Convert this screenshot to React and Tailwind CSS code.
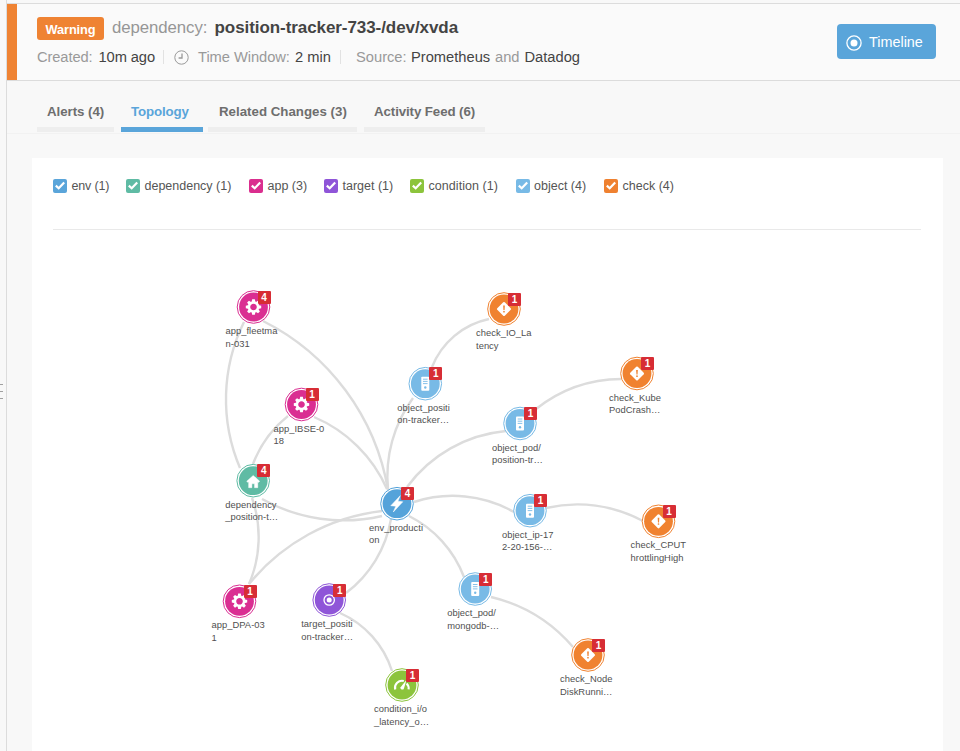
import React from "react";

const LEGEND = [
  { label: "env (1)", box: "bg-[#5aa5da]", width: "w-[73px]", tracking: "tracking-[-0.15px]" },
  { label: "dependency (1)", box: "bg-[#5fbba4]", width: "w-[123px]", tracking: "" },
  { label: "app (3)", box: "bg-[#da2e8e]", width: "w-[75px]", tracking: "" },
  { label: "target (1)", box: "bg-[#8f55d8]", width: "w-[86px]", tracking: "" },
  { label: "condition (1)", box: "bg-[#8cc43c]", width: "w-[105.5px]", tracking: "tracking-[0.06px]" },
  { label: "object (4)", box: "bg-[#78bae6]", width: "w-[88.5px]", tracking: "" },
  { label: "check (4)", box: "bg-[#ef8130]", width: "w-[80px]", tracking: "" },
];

const TABS = [
  { label: "Alerts (4)", width: "w-[77px]", gap: "mr-[7px]", pad: "pl-[10px]", tracking: "tracking-[-0.05px]" },
  { label: "Topology", width: "w-[82px]", gap: "mr-[5px]", pad: "pl-[10px]", tracking: "tracking-[-0.15px]", active: true },
  { label: "Related Changes (3)", width: "w-[149px]", gap: "mr-[7px]", pad: "pl-[11px]", tracking: "" },
  { label: "Activity Feed (6)", width: "w-[121px]", gap: "", pad: "pl-[10px]", tracking: "tracking-[-0.1px]" },
];

const COLORS = {
  app: "#da2e92",
  dependency: "#5fbba4",
  env: "#55a3da",
  target: "#8f55d8",
  condition: "#8cc43c",
  object: "#78bae6",
  check: "#f08230",
};

const NODES = [
  { type: "app", x: 253.5, y: 307, count: 4, lines: ["app_fleetma", "n-031"] },
  { type: "app", x: 301.5, y: 404.5, count: 1, lines: ["app_IBSE-0", "18"] },
  { type: "dependency", x: 253.2, y: 480.7, count: 4, lines: ["dependency", "_position-t…"] },
  { type: "app", x: 239.5, y: 601.3, count: 1, lines: ["app_DPA-03", "1"] },
  { type: "target", x: 329.2, y: 600, count: 1, lines: ["target_positi", "on-tracker…"] },
  { type: "condition", x: 402, y: 685, count: 1, lines: ["condition_i/o", "_latency_o…"] },
  { type: "env", x: 397, y: 503.7, count: 4, lines: ["env_producti", "on"] },
  { type: "object", x: 425.3, y: 383.7, count: 1, lines: ["object_positi", "on-tracker…"] },
  { type: "object", x: 520, y: 423.5, count: 1, lines: ["object_pod/", "position-tr…"] },
  { type: "object", x: 530, y: 510.7, count: 1, lines: ["object_ip-17", "2-20-156-…"] },
  { type: "object", x: 475.2, y: 589, count: 1, lines: ["object_pod/", "mongodb-…"] },
  { type: "check", x: 504, y: 309, count: 1, lines: ["check_IO_La", "tency"] },
  { type: "check", x: 637, y: 373.5, count: 1, lines: ["check_Kube", "PodCrash…"] },
  { type: "check", x: 658.5, y: 521.3, count: 1, lines: ["check_CPUT", "hrottlingHigh"] },
  { type: "check", x: 588, y: 655, count: 1, lines: ["check_Node", "DiskRunni…"] },
];

// Each edge is a circular arc: start, a point on the way, end.
const EDGES = [
  [263, 321, 343, 387, 388, 490],
  [244, 322, 226, 397, 240, 468],
  [288, 416, 267, 438, 253, 464],
  [314, 417, 352, 441, 387, 489],
  [262, 499, 333, 520, 382, 516],
  [252, 498, 258.6, 541, 249, 584],
  [249, 584, 299, 540, 382, 511],
  [391, 519, 374.5, 562, 346, 593],
  [340, 613, 371, 635, 392, 671],
  [432, 367, 458, 333, 489, 319],
  [413, 398, 395, 432, 388, 489],
  [407, 487, 453, 447, 506, 431],
  [536, 409, 573, 388, 621, 379],
  [414, 502, 459, 496, 514, 512],
  [546, 508, 590, 505, 643, 521],
  [409, 516, 441, 540, 464, 577],
  [491, 597, 540, 618, 573, 647],
];

function arcPath([x1, y1, x2, y2, x3, y3]) {
  const a = Math.hypot(x2 - x3, y2 - y3);
  const b = Math.hypot(x1 - x3, y1 - y3);
  const c = Math.hypot(x1 - x2, y1 - y2);
  const cross = (x2 - x1) * (y3 - y1) - (y2 - y1) * (x3 - x1);
  const r = (a * b * c) / (2 * Math.abs(cross));
  return `M${x1} ${y1}A${r} ${r} 0 0 ${cross > 0 ? 1 : 0} ${x3} ${y3}`;
}

const TEETH = [0, 45, 90, 135, 180, 225, 270, 315];

// Glyphs are drawn around the origin, which is the centre of the node.
function Glyph({ type, color }) {
  switch (type) {
    case "app":
      return (
        <g>
          <circle r="4.5" fill="none" stroke="white" strokeWidth="2.4" />
          {TEETH.map((t) => (
            <path key={t} d="M-2 -4.8L-1.3 -7.7H1.3L2 -4.8Z" fill="white" transform={`rotate(${t})`} />
          ))}
        </g>
      );
    case "dependency":
      return (
        <path
          d="M0 -5.3L6.5 0.5L5.4 1.7L4.6 1.1V7H1.3V3.1H-1.3V7H-4.6V1.1L-5.4 1.7L-6.5 0.5Z"
          fill="white"
          stroke="white"
          strokeWidth="0.4"
          strokeLinejoin="round"
        />
      );
    case "env":
      return (
        <path
          d="M3.2 -8L-6.2 2L-1.2 2.5L-3.7 8.3L5.8 -1.9L0.9 -2.5Z"
          fill="white"
          stroke="white"
          strokeWidth="0.5"
          strokeLinejoin="round"
        />
      );
    case "target":
      return (
        <g>
          <circle r="5.2" fill="none" stroke="white" strokeWidth="1.3" />
          <circle r="2.5" fill="white" />
        </g>
      );
    case "condition":
      return (
        <g fill="none" stroke="white">
          <path d="M-6.8 4.4A7 7 0 0 1 1.8 -4" strokeWidth="2.1" />
          <path d="M4.6 -1.6A7 7 0 0 1 6.6 4.4" strokeWidth="2.1" />
          <path d="M4.6 -5.2L1.9 3.4A1.7 1.7 0 1 1 -1.4 2.2Z" fill="white" stroke="none" />
        </g>
      );
    case "object":
      return (
        <g>
          <rect x="-4" y="-7" width="8" height="14" rx="0.9" fill="white" />
          <path d="M-2.3 -4.5H2.3M-2.3 -2.3H2.3M-2.3 -0.1H2.3" stroke={color} strokeWidth="0.9" />
          <circle cy="3.8" r="1.2" fill={color} />
        </g>
      );
    default:
      return (
        <g>
          <rect x="-5.3" y="-5.3" width="10.6" height="10.6" rx="1.1" fill="white" transform="rotate(45)" />
          <path d="M-0.85 -3.6H0.85L0.55 1.1H-0.55Z" fill={color} />
          <circle cy="2.7" r="0.85" fill={color} />
        </g>
      );
  }
}

function Disc({ node }) {
  const color = COLORS[node.type];
  return (
    <g transform={`translate(${node.x} ${node.y})`} stroke="none">
      <circle r="16.3" fill="white" stroke={color} strokeWidth="1" />
      <circle r="14.4" fill={color} />
      <Glyph type={node.type} color={color} />
    </g>
  );
}

function NodeText({ node }) {
  return (
    <div className="absolute w-[60px] pt-[36px]" style={{ left: node.x - 32 - 28, top: node.y - 231 - 18 }}>
      <span className="absolute left-[32px] top-[1.5px] w-[13px] h-[13px] rounded-[1px] bg-[#d72d35] text-white text-[10px] leading-[13px] font-bold text-center">
        {node.count}
      </span>
      <div className="text-[9.4px] leading-[12.6px] tracking-[0.03px] text-[#505050] whitespace-nowrap">
        {node.lines.map((line) => (
          <div key={line}>{line}</div>
        ))}
      </div>
    </div>
  );
}

function Checkbox({ box }) {
  return (
    <span className={`flex items-center justify-center w-[14px] h-[14px] rounded-[2px] shrink-0 ${box}`}>
      <svg width="14" height="14" viewBox="0 0 14 14" fill="none" stroke="white" strokeWidth="2.2">
        <path d="M2.8 6.6L5.7 9.3L11.2 3.5" />
      </svg>
    </span>
  );
}

function Header() {
  return (
    <header className="flex h-[77px] bg-[#fafafa] border-b border-[#dcdcdc]">
      <div className="w-[10px] bg-[#ef8333]" />
      <div className="flex-1 pl-5 pt-3">
        <div className="flex h-6 items-center">
          <span className="w-[67px] h-[23px] rounded-[3px] bg-[#ef8333] text-white text-[12.8px] leading-[25px] tracking-[-0.1px] font-bold text-center">
            Warning
          </span>
          <span className="ml-2 w-[102.5px] text-[16.8px] tracking-[-0.07px] text-[#969696]">dependency:</span>
          <span className="text-[17px] tracking-[-0.07px] font-bold text-[#444]">position-tracker-733-/dev/xvda</span>
        </div>
        <div className="flex items-center mt-[7px] h-5 text-[14.7px] text-[#999] whitespace-nowrap">
          <span className="w-[61.5px] tracking-[-0.1px]">Created:</span>
          <span className="w-[64.5px] text-[#444] tracking-[-0.1px]">10m ago</span>
          <span className="w-px h-[14px] bg-[#e2e2e2]" />
          <svg className="ml-[10px]" width="15" height="15" viewBox="0 0 15 15" fill="none" stroke="#999">
            <circle cx="7.5" cy="7.5" r="6.7" strokeWidth="1" />
            <path d="M8 3.6V8H4.6" strokeWidth="1.3" />
          </svg>
          <span className="ml-[9px] w-[97px] tracking-[-0.05px]">Time Window:</span>
          <span className="w-[45px] text-[#444]">2 min</span>
          <span className="w-px h-[14px] bg-[#e2e2e2]" />
          <span className="ml-[15px] w-[55px]">Source:</span>
          <span className="w-[84px] text-[#444]">Prometheus</span>
          <span className="w-[29.5px]">and</span>
          <span className="text-[#444]">Datadog</span>
        </div>
      </div>
      <button className="flex items-center mt-5 mr-6 w-[99px] h-[35px] rounded bg-[#5aa5da] pl-[9px] pt-[2px] text-[14.4px] text-white">
        <svg width="16" height="16" viewBox="-8 -8 16 16">
          <circle r="7.1" fill="none" stroke="white" strokeWidth="1.3" />
          <circle r="3.5" fill="white" />
        </svg>
        <span className="ml-[7px] pt-px">Timeline</span>
      </button>
    </header>
  );
}

function Tabs() {
  return (
    <nav className="flex items-end h-[53px] pl-[30px] pb-px border-b border-[#f2f2f2]">
      {TABS.map((t) => (
        <div
          key={t.label}
          className={`h-[31px] border-b-[5px] text-[13.3px] leading-[21px] font-bold whitespace-nowrap ${t.width} ${t.gap} ${t.pad} ${t.tracking} ${
            t.active ? "border-[#5aa5da] text-[#5aa5da]" : "border-[#eeeeee] text-[#6e6e6e]"
          }`}
        >
          {t.label}
        </div>
      ))}
    </nav>
  );
}

function Topology() {
  return (
    <section className="ml-[25px] mt-[24px] w-[911px] h-[594px] bg-white">
      <div className="flex ml-[21px] mr-[22px] h-[72px] mb-px pt-[21px] border-b border-[#e9e9e9] text-[12.5px] leading-[15px] text-[#555]">
        {LEGEND.map((l) => (
          <label key={l.label} className={`flex h-[14px] items-center gap-[4.5px] whitespace-nowrap ${l.width} ${l.tracking}`}>
            <Checkbox box={l.box} />
            <span>{l.label}</span>
          </label>
        ))}
      </div>
      <div className="relative h-[520px]">
        <svg className="block" width="911" height="520" viewBox="32 231 911 520" fill="none" stroke="#dcdcdc" strokeWidth="2.4">
          {EDGES.map((e, i) => (
            <path key={i} d={arcPath(e)} />
          ))}
          {NODES.map((n, i) => (
            <Disc key={i} node={n} />
          ))}
        </svg>
        {NODES.map((n, i) => (
          <NodeText key={i} node={n} />
        ))}
      </div>
    </section>
  );
}

export default function App() {
  return (
    <div className="flex w-[960px] h-[751px] overflow-hidden bg-[#f8f8f8] font-['Liberation_Sans',Arial,sans-serif]">
      <aside className="flex flex-col justify-center items-start w-[7px] pt-[31px] border-r border-[#dcdcdc] gap-[6px] shrink-0">
        <i className="w-[3px] h-px bg-[#a0a0a0]" />
        <i className="w-[3px] h-px bg-[#a0a0a0]" />
        <i className="w-[3px] h-px bg-[#a0a0a0]" />
      </aside>
      <main className="flex-1 min-w-0">
        <div className="h-1 border-b border-[#dcdcdc]" />
        <Header />
        <Tabs />
        <Topology />
      </main>
    </div>
  );
}
